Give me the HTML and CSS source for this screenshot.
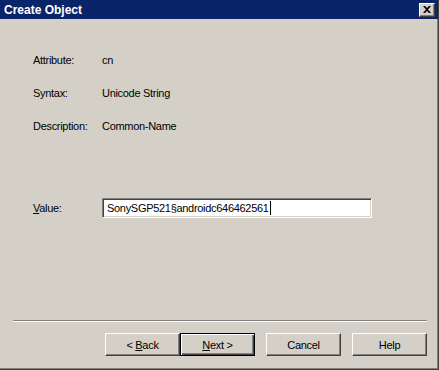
FILE: index.html
```html
<!DOCTYPE html>
<html lang="en">
<head>
    <meta charset="UTF-8">
    <title>Create Object</title>
    <link rel="stylesheet" href="styles.css">
</head>
<body>
    <div class="window">
        <!-- Title bar -->
        <div class="titlebar">
            <span class="title">Create Object</span>
            <div class="close">
                <svg width="8" height="7" viewBox="0 0 8 7">
                    <path d="M0 0h2l2 2 2-2h2L5 3.5 8 7H6L4 5 2 7H0l3-3.5z" fill="#000"/>
                </svg>
            </div>
        </div>

        <!-- Attribute info -->
        <div class="content">
            <div class="info">
                <span>Attribute:</span><span>cn</span>
                <span>Syntax:</span><span>Unicode String</span>
                <span>Description:</span><span>Common-Name</span>
            </div>

            <div class="value-row">
                <span class="label"><u>V</u>alue:</span>
                <div class="field"><span>SonySGP521§androidc646462561</span><span class="caret"></span></div>
            </div>
        </div>

        <!-- Wizard buttons -->
        <div class="footer">
            <div class="separator"></div>
            <div class="buttons">
                <div class="btn"><span>&lt; <u>B</u>ack</span></div>
                <div class="btn default"><span><u>N</u>ext &gt;</span></div>
                <div class="btn gap">Cancel</div>
                <div class="btn gap">Help</div>
            </div>
        </div>
    </div>
</body>
</html>
```

FILE: styles.css
```css
body {
    margin: 0;
    padding: 0;
    background: #d4d0c8;
    font-family: 'Liberation Sans', Arial, sans-serif;
    font-size: 11px;
    letter-spacing: -0.3px;
    color: #000;
}
.window {
    width: 439px;
    height: 370px;
    box-sizing: border-box;
    display: flex;
    flex-direction: column;
    background: #d4d0c8;
    border-right: 1px solid #404040;
    border-bottom: 1px solid #404040;
    box-shadow: inset -1px -1px 0 #808080, inset -2px -2px 0 #d4d0c8;
}
.titlebar {
    height: 19px;
    background: #0a246a;
    display: flex;
    align-items: center;
    justify-content: space-between;
    padding: 0 3px 0 4px;
}
.title {
    color: #fff;
    font-weight: bold;
    font-size: 12px;
    letter-spacing: 0;
}
.close {
    width: 16px;
    height: 14px;
    box-sizing: border-box;
    background: #d4d0c8;
    border-top: 1px solid #fff;
    border-left: 1px solid #fff;
    border-right: 1px solid #404040;
    border-bottom: 1px solid #404040;
    box-shadow: inset -1px -1px 0 #808080;
    display: flex;
    align-items: center;
    justify-content: center;
}
.content {
    flex: 1;
    padding: 35px 0 0 33px;
}
.info {
    display: grid;
    grid-template-columns: 69px auto;
    row-gap: 20px;
    line-height: 13px;
}
.value-row {
    display: flex;
    align-items: center;
    margin-top: 65px;
}
.value-row .label {
    width: 69px;
}
.field {
    width: 270px;
    height: 20px;
    box-sizing: border-box;
    background: #fff;
    border-top: 1px solid #808080;
    border-left: 1px solid #808080;
    border-right: 1px solid #fff;
    border-bottom: 1px solid #fff;
    box-shadow: inset 1px 1px 0 #404040, inset -1px -1px 0 #d4d0c8;
    padding: 0 4px;
    display: flex;
    align-items: center;
}
.caret {
    width: 1px;
    height: 14px;
    background: #000;
    margin-left: 1px;
}
.footer {
    padding: 0 11px 13px 13px;
}
.separator {
    height: 1px;
    background: #808080;
    border-bottom: 1px solid #fff;
    margin-bottom: 11px;
}
.buttons {
    display: flex;
    justify-content: flex-end;
}
.btn {
    width: 75px;
    height: 23px;
    box-sizing: border-box;
    display: flex;
    align-items: center;
    justify-content: center;
    border-top: 1px solid #fff;
    border-left: 1px solid #fff;
    border-right: 1px solid #404040;
    border-bottom: 1px solid #404040;
    box-shadow: inset -1px -1px 0 #808080;
}
.btn.default {
    border: 1px solid #000;
    box-shadow: inset 1px 1px 0 #fff, inset -1px -1px 0 #404040, inset -2px -2px 0 #808080;
}
.btn.gap {
    margin-left: 11px;
}
```
